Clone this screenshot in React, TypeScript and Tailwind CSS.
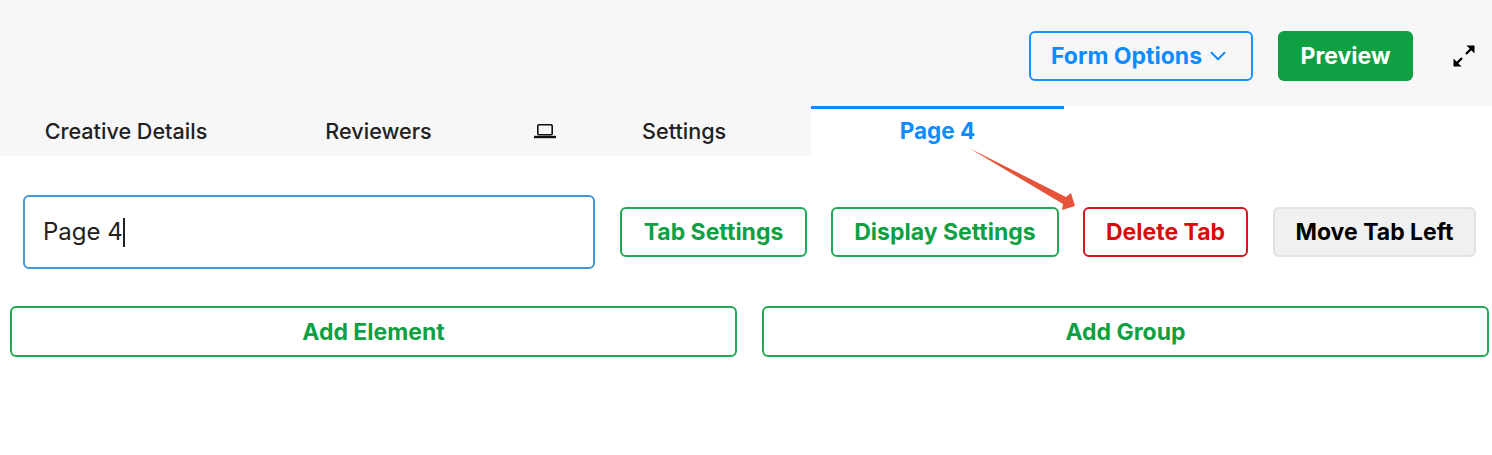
import React from 'react';
import { ChevronDown } from 'lucide-react';

const outlineGreen = 'rounded-md border-2 border-[#22a855] bg-white text-[23px] font-bold text-[#0ea043]';

const App: React.FC = () => {
  return (
    <div className="relative h-[455px] w-[1492px] overflow-hidden bg-white font-['Inter',sans-serif] antialiased">
      {/* Top bar */}
      <div className="flex h-[106px] items-center justify-end bg-[#f7f7f7] pt-[6px]">
        <button className="flex h-[50px] w-[224px] items-center justify-center gap-[3px] rounded-md border-2 border-[#1a8fff] text-[23px] font-bold text-[#0d8bff]">
          Form Options
          <ChevronDown size={26} strokeWidth={1.75} />
        </button>
        <button className="ml-[25px] h-[50px] w-[135px] rounded-md bg-[#0ea043] text-[23px] font-bold text-white">
          Preview
        </button>
        <div className="ml-[39px] mr-[16px]">
          <svg width="24" height="24" viewBox="0 0 24 24" fill="none" stroke="#000" strokeWidth="2.4">
            <path d="M14 10 20 4" />
            <path d="M14.500 1.500h8v8z" fill="#000" strokeWidth="0" />
            <path d="M10 14 4 20" />
            <path d="M9.500 22.500h-8v-8z" fill="#000" strokeWidth="0" />
          </svg>
        </div>
      </div>

      {/* Tabs */}
      <div className="flex h-[50px]">
        <div className="flex w-[811px] items-center bg-[#f7f7f7] text-[21.6px] font-medium text-[#212121]">
          <div className="w-[252px] text-center">Creative Details</div>
          <div className="w-[253px] text-center">Reviewers</div>
          <div className="flex w-[80px] justify-center">
            <svg width="22" height="16" viewBox="0 0 22 16" fill="none" stroke="#111" strokeWidth="1.6">
              <rect x="3.800" y="1.800" width="14.400" height="9.900" rx="1.200" />
              <path d="M0 14h22" strokeWidth="2.400" />
            </svg>
          </div>
          <div className="pl-[57px]">Settings</div>
        </div>
        <div className="flex w-[253px] items-center justify-center border-t-[3px] border-[#0d8bff] pb-[3px] text-[22.5px] font-bold text-[#0d8bff]">
          Page 4
        </div>
      </div>

      {/* Tab editor row */}
      <div className="mt-[39px] flex items-center pl-[23px]">
        <div className="flex h-[74px] w-[572px] items-center rounded-md border-2 border-[#4497d8] pl-[18px] text-[24px] text-[#212121]">
          Page 4
          <span className="h-[29px] w-[2px] bg-[#212121]" />
        </div>
        <button className={`ml-[25px] h-[50px] w-[187px] ${outlineGreen}`}>Tab Settings</button>
        <button className={`ml-[24px] h-[50px] w-[228px] ${outlineGreen}`}>Display Settings</button>
        <button className="ml-[24px] h-[50px] w-[165px] rounded-md border-2 border-[#d9161c] bg-white text-[23px] font-bold text-[#d60d0d]">
          Delete Tab
        </button>
        <button className="ml-[25px] h-[50px] w-[203px] rounded-md border-2 border-[#e2e2e2] bg-[#f0f0f0] text-[23px] font-bold text-black">
          Move Tab Left
        </button>
      </div>

      {/* Add buttons */}
      <div className="mt-[37px] flex gap-[25px] pl-[10px]">
        <button className={`h-[51px] w-[727px] pt-px ${outlineGreen}`}>Add Element</button>
        <button className={`h-[51px] w-[727px] pt-px ${outlineGreen}`}>Add Group</button>
      </div>

      {/* Annotation arrow */}
      <svg className="absolute left-[960px] top-[140px]" width="125" height="80" viewBox="960 140 125 80">
        <polygon points="969,148 1066,197 1071,193 1075,206 1062,210 1063,204" fill="#e5533a" />
      </svg>
    </div>
  );
};

export default App;
